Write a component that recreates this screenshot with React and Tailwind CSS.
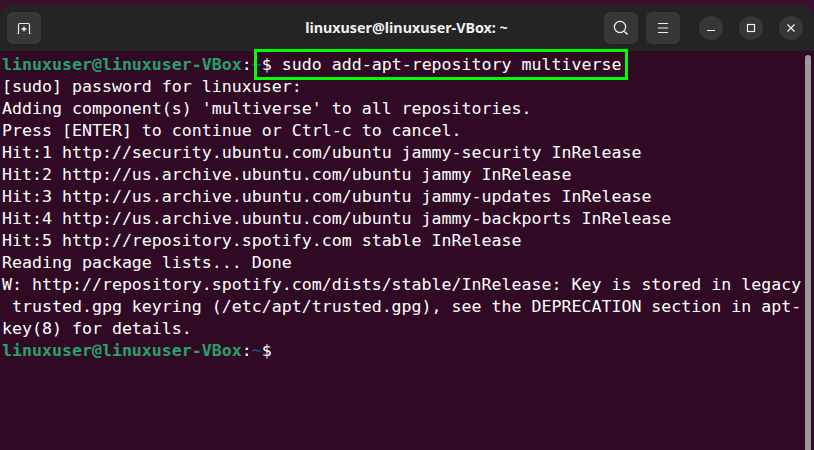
import React from "react";

const lines = [
  "[sudo] password for linuxuser:",
  "Adding component(s) 'multiverse' to all repositories.",
  "Press [ENTER] to continue or Ctrl-c to cancel.",
  "Hit:1 http://security.ubuntu.com/ubuntu jammy-security InRelease",
  "Hit:2 http://us.archive.ubuntu.com/ubuntu jammy InRelease",
  "Hit:3 http://us.archive.ubuntu.com/ubuntu jammy-updates InRelease",
  "Hit:4 http://us.archive.ubuntu.com/ubuntu jammy-backports InRelease",
  "Hit:5 http://repository.spotify.com stable InRelease",
  "Reading package lists... Done",
  "W: http://repository.spotify.com/dists/stable/InRelease: Key is stored in legacy",
  " trusted.gpg keyring (/etc/apt/trusted.gpg), see the DEPRECATION section in apt-",
  "key(8) for details.",
];

const Prompt = () => (
  <>
    <span className="font-bold text-[#26a269]">linuxuser@linuxuser-VBox</span>
    <span>:</span>
    <span className="font-bold text-[#12488b]">~</span>
    <span>$</span>
  </>
);

const HeaderButton = ({ children }) => (
  <button className="w-[34px] h-[32px] rounded-[6px] bg-[#373737] flex items-center justify-center text-[#f0f0f0]">
    {children}
  </button>
);

const WindowButton = ({ children }) => (
  <button className="w-[24px] h-[24px] rounded-full bg-[#373737] flex items-center justify-center text-[#f0f0f0]">
    {children}
  </button>
);

export default function App() {
  return (
    <div className="w-[814px] h-[450px] overflow-hidden bg-[#3b0f2e] pt-[5px] font-['DejaVu_Sans_Mono',monospace]">
      <div className="h-[445px] flex flex-col rounded-t-[12px] overflow-hidden">
        {/* HEADER */}
        <div className="h-[46px] shrink-0 bg-[#242424] grid grid-cols-[1fr_auto_1fr] items-center pl-[7px] pr-[11px] font-['Noto_Sans',sans-serif]">
          <div className="flex">
            <HeaderButton>
              <svg width="16" height="16" viewBox="0 0 16 16" fill="none" stroke="currentColor" strokeWidth="1.1">
                <path d="M1.5 13.5h1V5A1.5 1.5 0 0 1 4 3.5h8A1.5 1.5 0 0 1 13.5 5v8.5h1" />
                <path d="M8 6.5v5M5.5 9h5" strokeWidth="1.3" />
              </svg>
            </HeaderButton>
          </div>
          <div className="ml-[3px] text-center text-[14.3px] font-bold text-[#f0f0f0]">linuxuser@linuxuser-VBox: ~</div>
          <div className="flex items-center justify-end gap-[8px]">
            <HeaderButton>
              <svg width="16" height="16" viewBox="0 0 16 16" fill="none" stroke="currentColor" strokeWidth="1.2">
                <circle cx="7" cy="7" r="5.6" />
                <path d="M11.5 11.5L14.5 14.5" strokeWidth="1.6" />
              </svg>
            </HeaderButton>
            <HeaderButton>
              <svg width="16" height="16" viewBox="0 0 16 16" fill="none" stroke="currentColor" strokeWidth="1.2">
                <path d="M3 3.5h10M3 8h10M3 12.5h10" />
              </svg>
            </HeaderButton>
            <div className="flex items-center gap-[16px] ml-[11px]">
              <WindowButton>
                <svg width="10" height="10" viewBox="0 0 10 10" fill="none" stroke="currentColor" strokeWidth="1.2">
                  <path d="M1 7.5h8" />
                </svg>
              </WindowButton>
              <WindowButton>
                <svg width="10" height="10" viewBox="0 0 10 10" fill="none" stroke="currentColor" strokeWidth="1.2">
                  <rect x="1.5" y="1.5" width="7" height="7" />
                </svg>
              </WindowButton>
              <WindowButton>
                <svg width="10" height="10" viewBox="0 0 10 10" fill="none" stroke="currentColor" strokeWidth="1.2">
                  <path d="M1.5 1.5l7 7M8.5 1.5l-7 7" />
                </svg>
              </WindowButton>
            </div>
          </div>
        </div>

        {/* TERMINAL */}
        <div className="flex-1 flex bg-[#300a24] pt-[2px] text-white">
          <div className="relative flex-1 pl-[2px] text-[16.6px] leading-[22px] whitespace-pre">
            <div className="pt-[1px]">
              <span className="font-bold text-[#26a269]">linuxuser@linuxuser-VBox</span>
              <span>:</span>
              <span className="font-bold text-[#12488b]">~</span>
              <span>$ sudo add-apt-repository multiverse</span>
            </div>
            {lines.map((line, i) => (
              <div key={i}>{line}</div>
            ))}
            <div>
              <Prompt />
            </div>
            <div className="absolute left-[254px] top-[-4px] w-[374px] h-[31px] border-[3px] border-[#00ff00]" />
          </div>
          <div className="w-[6px] mr-[3px] pt-[2px] shrink-0">
            <div className="h-full w-[6px] rounded-t-full bg-[#9c979b]" />
          </div>
        </div>
      </div>
    </div>
  );
}
